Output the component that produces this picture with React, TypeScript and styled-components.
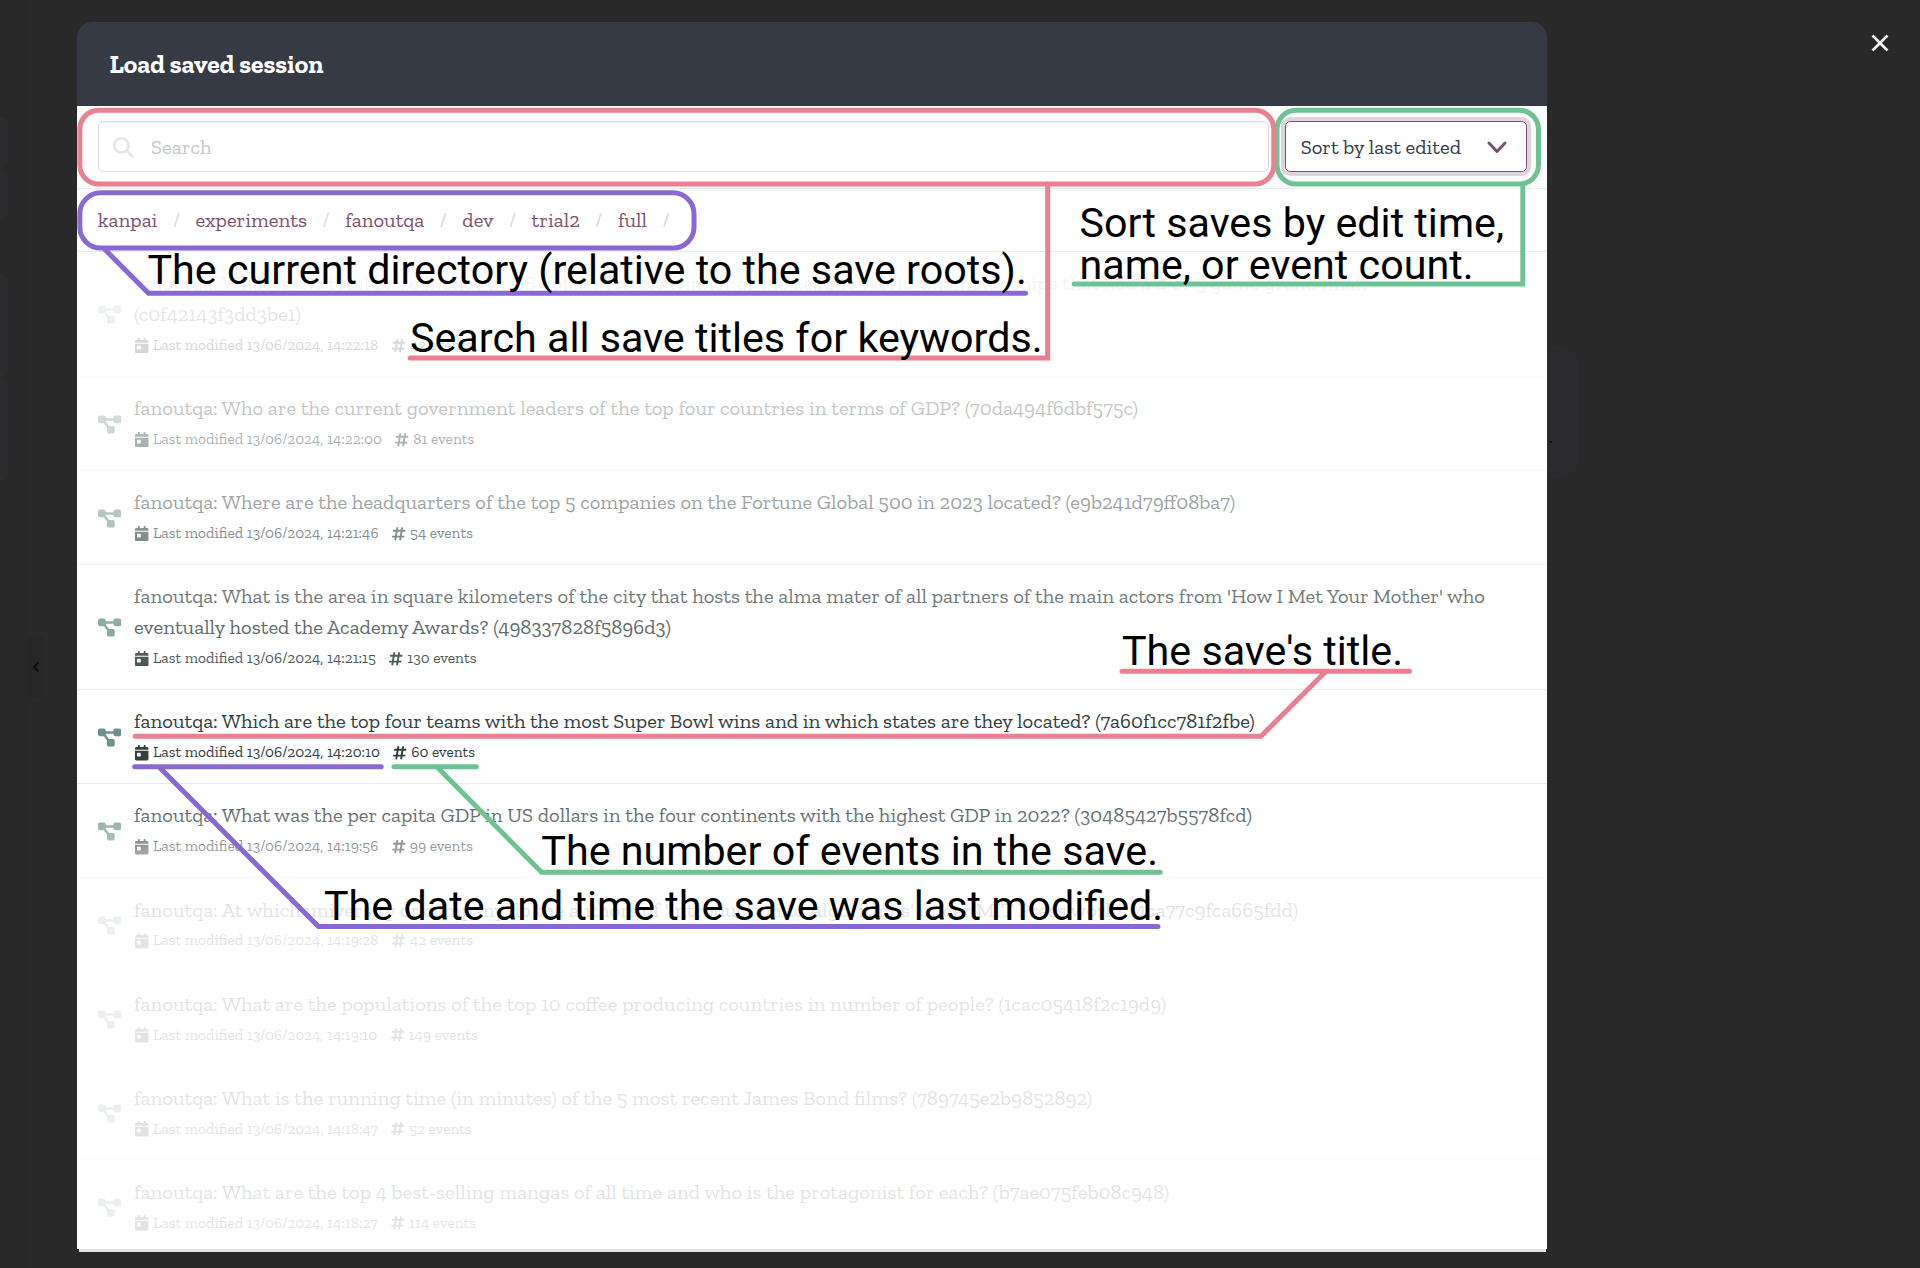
import React from 'react';
import styled, { createGlobalStyle } from 'styled-components';
import { FaCalendarDay, FaHashtag, FaDiagramProject, FaMagnifyingGlass } from 'react-icons/fa6';

const serif = "'Zilla Slab', 'Liberation Serif', serif";
const colors = { red: '#ea8090', green: '#6dc492', purple: '#8a68d4', plum: '#7f4f72' };

const Global = createGlobalStyle`
  * { box-sizing: border-box; }
  html, body { margin: 0; background: #292929; }
  body { overflow: hidden; }
`;

const Screen = styled.div`
  position: relative;
  display: flex;
  width: 1920px;
  height: 1268px;
  padding: 22px 0 0 77.4px;
  background: #292929;
  overflow: hidden;
  font-family: ${serif};
  font-size: 20.63px;
  line-height: 30.9px;
  color: #31403e;
`;

/* Dimmed page behind the modal */
const Sidebar = styled.div`
  position: absolute;
  left: 0;
  top: 0;
  width: 28px;
  height: 100%;
  background: #282828;
`;

const DimCard = styled.div<{ $top: number; $height: number }>`
  position: absolute;
  left: 0;
  top: ${p => p.$top}px;
  width: 8px;
  height: ${p => p.$height}px;
  border-radius: 0 6px 6px 0;
  background: #2b2b2d;
`;

const CollapseTab = styled.div`
  position: absolute;
  left: 28px;
  top: 636px;
  width: 16px;
  height: 62px;
  display: flex;
  align-items: center;
  justify-content: center;
  border-radius: 0 5px 5px 0;
  background: #272727;
`;

const DimMessage = styled.div`
  position: absolute;
  left: 1500px;
  top: 346px;
  width: 78.5px;
  height: 132px;
  padding: 75px 0 0 48.5px;
  border-radius: 0 20px 20px 0;
  background: #2b2b2e;
  color: #0c0c0c;
`;

const CloseButton = styled.button`
  position: absolute;
  left: 1866px;
  top: 28.5px;
  display: flex;
  align-items: center;
  justify-content: center;
  width: 28px;
  height: 28px;
  padding: 0;
  border: 0;
  background: none;
`;

const Modal = styled.section`
  position: relative;
  display: flex;
  flex-direction: column;
  width: 1470px;
  height: 1229.7px;
`;

const Header = styled.header`
  display: flex;
  align-items: center;
  flex: none;
  height: 83.6px;
  padding: 3px 32px 0;
  border-radius: 15.5px 15.5px 0 0;
  background: #363a45;
  color: #fff;
  font-size: 25.75px;
  font-weight: 700;
`;

const Body = styled.div`
  flex: 1;
  min-height: 0;
  overflow: hidden;
  background: #fff;
`;

const Foot = styled.div`
  flex: none;
  height: 3.2px;
  margin: 0 1.7px;
  background: #e2e5e5;
`;

const Toolbar = styled.div`
  display: flex;
  gap: 16px;
  height: 83.4px;
  padding: 15.4px 20.6px 0;
  border-bottom: 1px solid #ececef;
`;

const SearchBox = styled.div`
  display: flex;
  align-items: center;
  flex: 1;
  gap: 17px;
  height: 51.5px;
  padding: 1px 0 0 14.5px;
  border: 1.5px solid #dbdbe4;
  border-radius: 5.2px;
  box-shadow: inset 0 1px 2px rgba(10, 10, 10, 0.05);
  color: #c4cac9;

  svg { color: #dfe7e6; }
`;

const SortSelect = styled.div`
  display: flex;
  align-items: center;
  justify-content: space-between;
  width: 242px;
  height: 51.5px;
  padding: 1.5px 18.5px 0 15px;
  border: 1.5px solid ${colors.plum};
  border-radius: 5.2px;
  box-shadow: 0 0 0 4px rgba(127, 79, 114, 0.25);
  color: #363a45;
`;

const Breadcrumb = styled.nav`
  display: flex;
  align-items: center;
  height: 62.9px;
  padding: 2px 20.4px 0;
  border-bottom: 1px solid #ebebeb;
`;

const Crumb = styled.a`
  display: flex;
  color: ${colors.plum};

  &::after {
    content: '/';
    width: 38.1px;
    text-align: center;
    color: #d6d8e2;
  }
`;

const List = styled.div`
  position: relative;
`;

const Row = styled.article<{ $lines: number }>`
  display: flex;
  align-items: center;
  height: ${p => (p.$lines === 2 ? 125 : 94.07)}px;
  padding: 1.6px 41px 0 20.4px;
  border-bottom: 1px solid #e9ebeb;

  > svg { flex: none; color: #6e918d; }
`;

const RowText = styled.div`
  flex: 1;
  margin-left: 13px;
`;

const Meta = styled.div`
  display: flex;
  align-items: center;
  height: 30.9px;
  font-size: 15.45px;
`;

const MetaItem = styled.span`
  display: flex;
  align-items: center;
  gap: 3.5px;
  margin-right: 12.5px;
  white-space: pre;
`;

/* Fades out every entry but the highlighted one */
const Fade = styled.div`
  position: absolute;
  inset: 0;
  background: linear-gradient(
    to bottom,
    rgba(255, 255, 255, 0.95) 0,
    rgba(255, 255, 255, 0.94) 40px,
    rgba(255, 255, 255, 0.87) 62px,
    rgba(255, 255, 255, 0.8) 93px,
    rgba(255, 255, 255, 0.71) 157px,
    rgba(255, 255, 255, 0.6) 188px,
    rgba(255, 255, 255, 0.53) 251px,
    rgba(255, 255, 255, 0.41) 282px,
    rgba(255, 255, 255, 0.31) 345px,
    rgba(255, 255, 255, 0.14) 408px,
    rgba(255, 255, 255, 0) 440px,
    rgba(255, 255, 255, 0) 528px,
    rgba(255, 255, 255, 0.26) 564px,
    rgba(255, 255, 255, 0.48) 595px,
    rgba(255, 255, 255, 0.71) 622px,
    rgba(255, 255, 255, 0.86) 645px,
    rgba(255, 255, 255, 0.86) 100%
  );
`;

const Annotations = styled.div`
  position: absolute;
  inset: 0;
  font-family: Roboto, sans-serif;
  font-size: 41.25px;
  line-height: 41.6px;
  color: #000;
  white-space: pre;
`;

const Strokes = styled.svg`
  position: absolute;
  inset: 0;
  fill: none;
  stroke-width: 5;
  stroke-linecap: round;
`;

const Note = styled.div<{ $x: number; $baseline: number }>`
  position: absolute;
  left: ${p => p.$x}px;
  top: ${p => p.$baseline - 34}px;
`;

const crumbs = ['kanpai', 'experiments', 'fanoutqa', 'dev', 'trial2', 'full'];

const saves = [
  { title: 'What is the total prize money in US dollars for the winner of the League World Championships that had a 4 or 5 game grand final?', id: 'c0f42143f3dd3be1', time: '14:22:18', events: 42, lines: 2 },
  { title: 'Who are the current government leaders of the top four countries in terms of GDP?', id: '70da494f6dbf575c', time: '14:22:00', events: 81, lines: 1 },
  { title: 'Where are the headquarters of the top 5 companies on the Fortune Global 500 in 2023 located?', id: 'e9b241d79ff08ba7', time: '14:21:46', events: 54, lines: 1 },
  { title: "What is the area in square kilometers of the city that hosts the alma mater of all partners of the main actors from 'How I Met Your Mother' who eventually hosted the Academy Awards?", id: '498337828f5896d3', time: '14:21:15', events: 130, lines: 2 },
  { title: 'Which are the top four teams with the most Super Bowl wins and in which states are they located?', id: '7a60f1cc781f2fbe', time: '14:20:10', events: 60, lines: 1 },
  { title: 'What was the per capita GDP in US dollars in the four continents with the highest GDP in 2022?', id: '30485427b5578fcd', time: '14:19:56', events: 99, lines: 1 },
  { title: "At which university or company do the authors of 'Introduction to Algorithms' under MIT Press work?", id: '4ca77c9fca665fdd', time: '14:19:28', events: 42, lines: 1 },
  { title: 'What are the populations of the top 10 coffee producing countries in number of people?', id: '1cac05418f2c19d9', time: '14:19:10', events: 149, lines: 1 },
  { title: 'What is the running time (in minutes) of the 5 most recent James Bond films?', id: '789745e2b9852892', time: '14:18:47', events: 52, lines: 1 },
  { title: 'What are the top 4 best-selling mangas of all time and who is the protagonist for each?', id: 'b7ae075feb08c948', time: '14:18:27', events: 114, lines: 1 },
];

export default function App() {
  return (
    <Screen>
      <Global />
      <Sidebar />
      <DimCard $top={117} $height={51} />
      <DimCard $top={169} $height={51} />
      <DimCard $top={274} $height={103} />
      <DimCard $top={378} $height={103} />
      <CollapseTab>
        <svg width="8" height="12" viewBox="0 0 8 12" fill="none" stroke="#0c0c0c" strokeWidth="2">
          <path d="M6.5 1.5 2 6l4.500 4.500" />
        </svg>
      </CollapseTab>
      <DimMessage>.</DimMessage>
      <CloseButton aria-label="close">
        <svg width="18" height="18" viewBox="0 0 18 18" stroke="#fff" strokeWidth="2.6">
          <path d="M1.500 1.500l15 15M16.500 1.500l-15 15" />
        </svg>
      </CloseButton>

      <Modal>
        <Header>Load saved session</Header>
        <Body>
          <Toolbar>
            <SearchBox>
              <FaMagnifyingGlass size={20.6} />
              Search
            </SearchBox>
            <SortSelect>
              Sort by last edited
              <svg width="20" height="13" viewBox="0 0 20 13" fill="none" stroke={colors.plum} strokeWidth="3" strokeLinecap="round" strokeLinejoin="round">
                <path d="M2 2l8 8.500L18 2" />
              </svg>
            </SortSelect>
          </Toolbar>
          <Breadcrumb>
            {crumbs.map(c => <Crumb key={c}>{c}</Crumb>)}
          </Breadcrumb>
          <List>
            {saves.map(s => (
              <Row key={s.id} $lines={s.lines}>
                <FaDiagramProject size={23.2} />
                <RowText>
                  <div>fanoutqa: {s.title} ({s.id})</div>
                  <Meta>
                    <MetaItem><FaCalendarDay size={15.45} />Last modified 13/06/2024, {s.time}</MetaItem>
                    <MetaItem><FaHashtag size={15.45} />{s.events} events</MetaItem>
                  </Meta>
                </RowText>
              </Row>
            ))}
            <Fade />
          </List>
        </Body>
        <Foot />
      </Modal>

      <Annotations>
        <Strokes width="1920" height="1268" viewBox="0 0 1920 1268">
          <g stroke={colors.green}>
            <rect x="1277" y="110.300" width="261.500" height="73.800" rx="19" />
            <path d="M1522.800 184V284H1074.200" />
            <path d="M394 766.700H476.300M437.500 767.500L541.600 872.300H1160.300" />
          </g>
          <g stroke={colors.red}>
            <rect x="79.800" y="110.300" width="1194" height="73.800" rx="19" />
            <path d="M1047.700 184V358H410.200" />
            <path d="M135.200 736.300H1261L1326 671.300M1122 671.300H1409.500" />
          </g>
          <g stroke={colors.purple}>
            <rect x="79.800" y="192.800" width="614.200" height="55.300" rx="21" />
            <path d="M105 249.500L148.500 293.300H1025.500" />
            <path d="M134.700 766.700H381.200M159.600 767.500L318.500 926.500H1158" />
          </g>
        </Strokes>
        <Note $x={147.5} $baseline={283.7}>The current directory (relative to the save roots).</Note>
        <Note $x={410} $baseline={351.7}>Search all save titles for keywords.</Note>
        <Note $x={1079.5} $baseline={237.3}>{'Sort saves by edit time,\nname, or event count.'}</Note>
        <Note $x={1122} $baseline={665}>The save's title.</Note>
        <Note $x={541.3} $baseline={865}>The number of events in the save.</Note>
        <Note $x={324} $baseline={920}>The date and time the save was last modified.</Note>
      </Annotations>
    </Screen>
  );
}
